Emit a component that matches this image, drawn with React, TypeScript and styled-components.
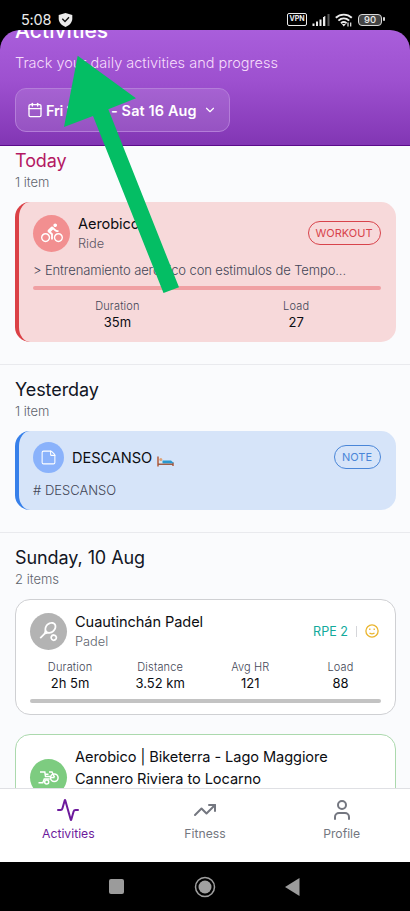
import React from "react";
import styled, { createGlobalStyle } from "styled-components";
import { Activity, Calendar, ChevronDown, StickyNote, TrendingUp, User } from "lucide-react";
import { MdDirectionsBike, MdSportsTennis } from "react-icons/md";

const GlobalStyle = createGlobalStyle`
  * { box-sizing: border-box; }
  body { margin: 0; background: #000; font-family: Inter, "Noto Sans", sans-serif; }
  svg { display: block; flex: none; }
`;

const Screen = styled.div`
  position: relative;
  display: flex;
  flex-direction: column;
  width: 410px;
  height: 911px;
  overflow: hidden;
  background: #000;
`;

const StatusBar = styled.div`
  display: flex;
  align-items: center;
  flex: none;
  height: 30px;
  padding: 9px 28px 0 21px;
  color: #ececec;
`;

const Clock = styled.span`
  width: 37px;
  font-size: 14.5px;
  line-height: 20px;
  letter-spacing: -0.2px;
`;

const StatusIcons = styled.div`
  display: flex;
  align-items: center;
  gap: 5px;
  margin-left: auto;
`;

const VpnTag = styled.span`
  width: 20px;
  height: 13px;
  border: 1.5px solid #ececec;
  border-radius: 2px;
  font-size: 7px;
  font-weight: 700;
  line-height: 10.5px;
  text-align: center;
`;

const Battery = styled.span`
  position: relative;
  width: 24px;
  height: 12px;
  border: 1.5px solid #d8d8d8;
  border-radius: 4px;
  background: #444;
  font-size: 9.5px;
  font-weight: 500;
  line-height: 9.5px;
  text-align: center;
  &::after {
    content: "";
    position: absolute;
    top: 2.5px;
    right: -4px;
    width: 2px;
    height: 4px;
    background: #d8d8d8;
    border-radius: 1px;
  }
`;

const Header = styled.header`
  flex: none;
  height: 116px;
  padding: 0 15px;
  overflow: hidden;
  border-bottom: 1px solid #5b0b8c;
  border-radius: 20px 20px 0 0;
  background: linear-gradient(#a95edb, #9d50cf 45%, #8236b4);
  color: #fff;
`;

const PageTitle = styled.h1`
  margin: -13px 0 0;
  font-size: 21px;
  font-weight: 500;
  line-height: 28px;
  letter-spacing: 0.05px;
`;

const Tagline = styled.p`
  margin: 8px 0 0;
  font-size: 14.5px;
  font-weight: 300;
  line-height: 20px;
  letter-spacing: 0;
  color: #f6dcfb;
`;

const DateButton = styled.button`
  display: flex;
  align-items: center;
  width: 215px;
  height: 44px;
  margin: 15px 0 0;
  padding: 0 11px;
  border: 1px solid #b47dd9;
  border-radius: 11px;
  background: rgba(255, 255, 255, 0.12);
  color: #fff;
  font: 600 14.4px Inter, sans-serif;
  text-align: left;
  white-space: nowrap;
`;

const DateFrom = styled.span`
  width: 65px;
  margin-left: 3px;
  letter-spacing: -0.2px;
`;

const DateTo = styled.span`
  width: 92px;
  letter-spacing: 0.15px;
`;

const Feed = styled.main`
  flex: none;
  height: 642px;
  overflow: hidden;
  background: #fafbfd;
`;

const Day = styled.section<{ $top: number }>`
  padding: ${(p) => p.$top}px 14.5px 22px 15px;
  border-bottom: 1.5px solid #e9eaee;
`;

const DayTitle = styled.h2<{ $color?: string }>`
  margin: 0;
  font-size: 18px;
  font-weight: 400;
  line-height: 25px;
  letter-spacing: -0.08px;
  color: ${(p) => p.$color ?? "#111524"};
`;

const DayCount = styled.p`
  margin: -1px 0 10px;
  font-size: 13px;
  font-weight: 300;
  line-height: 20px;
  color: #60646e;
`;

const TintedCard = styled.article<{ $accent: string; $fill: string; $height: number; $pad: number }>`
  height: ${(p) => p.$height}px;
  padding: ${(p) => p.$pad}px 15px 0 14px;
  border-left: 4px solid ${(p) => p.$accent};
  border-radius: 15px;
  background: ${(p) => p.$fill};
`;

const OutlinedCard = styled.article<{ $line: string; $height: number }>`
  height: ${(p) => p.$height}px;
  margin-bottom: 19.5px;
  padding: 10px 14px 0;
  border: 1px solid ${(p) => p.$line};
  border-radius: 15px;
  background: #fff;
`;

const CardHead = styled.div`
  display: flex;
  align-items: center;
  gap: 8px;
`;

const Disc = styled.span<{ $size: number; $color: string }>`
  display: flex;
  align-items: center;
  justify-content: center;
  flex: none;
  width: ${(p) => p.$size}px;
  height: ${(p) => p.$size}px;
  border-radius: 50%;
  background: ${(p) => p.$color};
  color: #fff;
`;

const Names = styled.div`
  flex: 1;
  padding-top: 2px;
  white-space: nowrap;
`;

const Name = styled.div<{ $line?: number }>`
  display: flex;
  align-items: center;
  font-size: 14.6px;
  font-weight: 400;
  line-height: ${(p) => p.$line ?? 20}px;
  letter-spacing: -0.08px;
  color: #0c0d12;
`;

const Sport = styled.div<{ $color?: string }>`
  font-size: 12.8px;
  font-weight: 300;
  line-height: 20px;
  color: ${(p) => p.$color ?? "#60646e"};
`;

const Pill = styled.span<{ $color: string; $width: number }>`
  width: ${(p) => p.$width}px;
  height: 24.5px;
  border: 1px solid ${(p) => p.$color};
  border-radius: 13px;
  color: ${(p) => p.$color};
  font-size: 11px;
  line-height: 22.5px;
  text-align: center;
`;

const Note = styled.p<{ $top: number; $spacing?: number }>`
  margin: ${(p) => p.$top}px 0 0;
  font-size: 13px;
  font-weight: 300;
  line-height: 20px;
  letter-spacing: ${(p) => p.$spacing ?? 0}px;
  color: #434656;
  white-space: nowrap;
`;

const Bar = styled.div<{ $color: string; $top: number }>`
  height: 4px;
  margin-top: ${(p) => p.$top}px;
  border-radius: 2px;
  background: ${(p) => p.$color};
`;

const Stats = styled.div<{ $columns: number; $top: number }>`
  display: grid;
  grid-template-columns: repeat(${(p) => p.$columns}, 1fr);
  margin: ${(p) => p.$top}px -5px 0;
  text-align: center;
`;

const StatLabel = styled.div`
  font-size: 11px;
  font-weight: 300;
  line-height: 16px;
  letter-spacing: 0.15px;
  color: #434656;
`;

const StatValue = styled.div`
  font-size: 13px;
  line-height: 17px;
  color: #0c0d12;
`;

const Effort = styled.div`
  display: flex;
  align-items: center;
  gap: 8px;
  padding-right: 1.5px;
  color: #12aa9c;
  font-size: 12.6px;
`;

const Separator = styled.span`
  width: 1px;
  height: 11px;
  background: #d5d6da;
`;

const TabBar = styled.nav`
  display: grid;
  grid-template-columns: repeat(3, 1fr);
  flex: none;
  height: 74px;
  border-top: 1.5px solid #dfe0e4;
  background: #fff;
`;

const Tab = styled.div<{ $active?: boolean }>`
  display: flex;
  flex-direction: column;
  align-items: center;
  padding-top: 8.5px;
  color: ${(p) => (p.$active ? "#6d1a9c" : "#747780")};
  font-size: 12.2px;
  line-height: 18px;
  gap: 3px;
`;

const SystemBar = styled.div`
  display: flex;
  align-items: center;
  justify-content: space-between;
  flex: 1;
  padding: 0 110px 0 109px;
`;

const Pointer = styled.svg`
  position: absolute;
  left: 0;
  top: 0;
  pointer-events: none;
`;

const Shield = () => (
  <svg width="15" height="14" viewBox="0 0 15 14">
    <path d="M7.5 0 14.3 2v3.5c0 4-3 7-6.8 8.5C3.700 12.500.7 9.500.7 5.500V2Z" fill="#ececec" />
    <path d="m4.300 5.800 2.700 2.700 4-4.300" fill="none" stroke="#111" strokeWidth="1.300" />
  </svg>
);

const Signal = () => (
  <svg width="18" height="12" viewBox="0 0 18 12" strokeWidth="2">
    <path d="M1.500 12V9.500M5 12V7.500M8.500 12V5.500M12 12V3" stroke="#ececec" />
    <path d="M12.800 12V2" stroke="#ececec" strokeWidth="1" />
    <path d="M16.500 12V0" stroke="#555" />
  </svg>
);

const Wifi = () => (
  <svg width="18" height="14" viewBox="0 0 18 14" fill="none" stroke="#ececec" strokeWidth="1.900">
    <path d="M.8 4.800c4.600-4.300 11.400-4.300 16 0M3.400 7.600c3.200-2.900 7.600-2.900 10.800 0M6 10.200c1.700-1.400 3.800-1.400 5.600 0" />
    <path d="m6.800 11 2 2.400 2-2.400Z" fill="#ececec" stroke="none" />
    <path d="M13 9.500v4M15.700 9.500v4" strokeWidth="1.200" />
  </svg>
);

const Bed = () => (
  <svg width="18" height="17" viewBox="-1 -6 18 17">
    <path d="M1 .5v10M16 6.500v3.500" stroke="#b96c50" strokeWidth="1.700" />
    <path d="M1 8.200h15" stroke="#9c573f" strokeWidth="1.500" />
    <path d="M2.300 5h4v2.200h-4z" fill="#d9e6ee" />
    <path d="M5.500 4.500h8.500l3 2.800H5.500z" fill="#2998ce" />
    <circle cx="3.800" cy="3.600" r="1.500" fill="#e0a377" />
  </svg>
);

const Handcycle = () => (
  <svg width="21" height="14" viewBox="0 0 21 14" fill="none" stroke="#fff" strokeWidth="1.500">
    <path d="M2 1h4.800l.7 4.500h4.700M7.500 3.300h3M.5 11.800h4.300L6.300 8h5.400M11 1h3l2.500 5.300M12.200 6.500h4.300" />
    <circle cx="16.300" cy="6.700" r="3.800" />
    <circle cx="8.700" cy="11" r="2" />
  </svg>
);

const Face = () => (
  <svg width="14" height="14" viewBox="0 0 14 14" fill="none" stroke="#eab52e" strokeWidth="1.300">
    <circle cx="7" cy="7" r="6.100" />
    <path d="M4.800 4.500v1.600M9.200 4.500v1.600M4.500 9c1.400 1 3.600 1 5 0" />
  </svg>
);

const StatGroup = ({ items, top }: { items: [string, string][]; top: number }) => (
  <Stats $columns={items.length} $top={top}>
    {items.map(([label, value]) => (
      <div key={label}>
        <StatLabel>{label}</StatLabel>
        <StatValue>{value}</StatValue>
      </div>
    ))}
  </Stats>
);

export default function App() {
  return (
    <Screen>
      <GlobalStyle />
      <StatusBar>
        <Clock>5:08</Clock>
        <Shield />
        <StatusIcons>
          <VpnTag>VPN</VpnTag>
          <Signal />
          <Wifi />
          <Battery>90</Battery>
        </StatusIcons>
      </StatusBar>

      <Header>
        <PageTitle>Activities</PageTitle>
        <Tagline>Track your daily activities and progress</Tagline>
        <DateButton>
          <Calendar size={16} strokeWidth={2} />
          <DateFrom>Fri 1 Aug</DateFrom>
          <DateTo>- Sat 16 Aug</DateTo>
          <ChevronDown size={14} />
        </DateButton>
      </Header>

      <Feed>
        <Day $top={2}>
          <DayTitle $color="#b41863">Today</DayTitle>
          <DayCount>1 item</DayCount>
          <TintedCard $accent="#db4146" $fill="#f7d9da" $height={139.5} $pad={10}>
            <CardHead>
              <Disc $size={37} $color="#f28f90"><MdDirectionsBike size={22} /></Disc>
              <Names>
                <Name>Aerobico</Name>
                <Sport $color="#5c5564">Ride</Sport>
              </Names>
              <Pill $color="#d8434b" $width={73}>WORKOUT</Pill>
            </CardHead>
            <Note $top={6} $spacing={-0.11}>&gt; Entrenamiento aerobico con estimulos de Tempo...</Note>
            <Bar $color="#f0a0a3" $top={6} />
            <StatGroup top={7.5} items={[["Duration", "35m"], ["Load", "27"]]} />
          </TintedCard>
        </Day>

        <Day $top={12}>
          <DayTitle>Yesterday</DayTitle>
          <DayCount>1 item</DayCount>
          <TintedCard $accent="#3780ea" $fill="#d6e4f9" $height={79} $pad={11}>
            <CardHead>
              <Disc $size={31} $color="#8ab2fb"><StickyNote size={17} strokeWidth={1.5} /></Disc>
              <Names>
                <Name>DESCANSO&nbsp;<Bed /></Name>
              </Names>
              <Pill $color="#4a86d8" $width={47}>NOTE</Pill>
            </CardHead>
            <Note $top={7}># DESCANSO</Note>
          </TintedCard>
        </Day>

        <Day $top={12.5}>
          <DayTitle>Sunday, 10 Aug</DayTitle>
          <DayCount>2 items</DayCount>
          <OutlinedCard $line="#cfd0d3" $height={115.5}>
            <CardHead>
              <Disc $size={37} $color="#b3b3b3"><MdSportsTennis size={21} /></Disc>
              <Names>
                <Name>Cuautinchán Padel</Name>
                <Sport>Padel</Sport>
              </Names>
              <Effort>
                RPE 2 <Separator /> <Face />
              </Effort>
            </CardHead>
            <StatGroup
              top={7}
              items={[["Duration", "2h 5m"], ["Distance", "3.52 km"], ["Avg HR", "121"], ["Load", "88"]]}
            />
            <Bar $color="#c3c3c3" $top={7} />
          </OutlinedCard>
          <OutlinedCard $line="#abd9ad" $height={115}>
            <CardHead>
              <Disc $size={37} $color="#7dcc80"><Handcycle /></Disc>
              <Names>
                <Name $line={21.5}>Aerobico | Biketerra - Lago Maggiore</Name>
                <Name $line={21.5}>Cannero Riviera to Locarno</Name>
                <Sport>&nbsp;</Sport>
              </Names>
            </CardHead>
          </OutlinedCard>
        </Day>
      </Feed>

      <TabBar>
        <Tab $active><Activity size={24} />Activities</Tab>
        <Tab><TrendingUp size={24} />Fitness</Tab>
        <Tab><User size={24} />Profile</Tab>
      </TabBar>

      <SystemBar>
        <svg width="15" height="15"><rect width="15" height="15" rx="2" fill="#9b9b9b" /></svg>
        <svg width="22" height="22" viewBox="0 0 22 22">
          <circle cx="11" cy="11" r="9.500" fill="none" stroke="#a0a0a0" strokeWidth="1.500" />
          <circle cx="11" cy="11" r="6.500" fill="#a0a0a0" />
        </svg>
        <svg width="15" height="18"><path d="M0 9 14.500 0v18Z" fill="#9b9b9b" /></svg>
      </SystemBar>

      <Pointer width="410" height="911">
        <path d="M77.700 55.700 136 98.300l-27.700 11L179 287.300l-15.500 5.700L93 116l-29 11Z" fill="#04be64" />
      </Pointer>
    </Screen>
  );
}
